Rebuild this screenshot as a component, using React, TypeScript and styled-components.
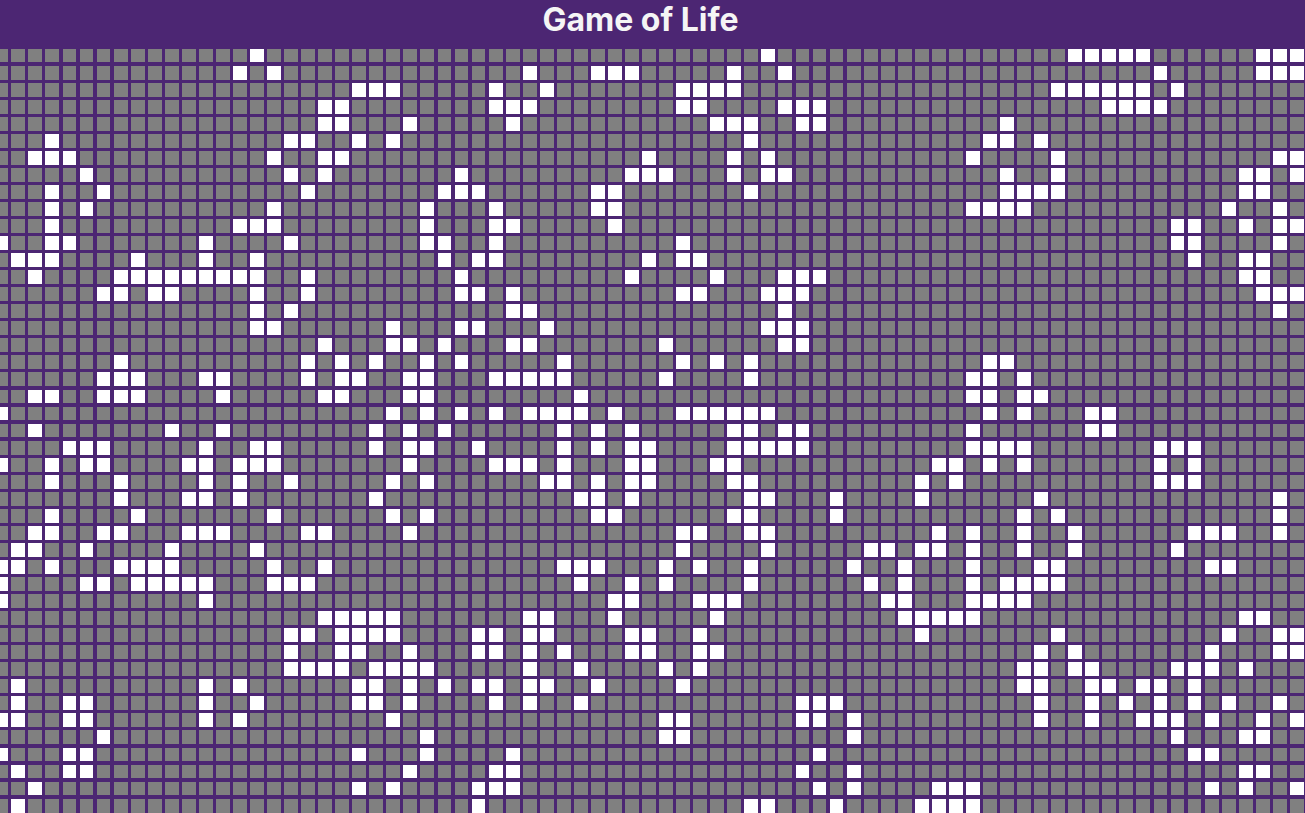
import styled, { createGlobalStyle } from "styled-components";

const COLS = 77;

// alive cells of the current generation, column numbers per row
const BOARD: number[][] = [
    [15, 45, 63, 64, 65, 66, 67, 74, 75, 76],
    [14, 16, 31, 35, 36, 37, 43, 46, 68, 74, 75, 76],
    [21, 22, 23, 29, 32, 40, 41, 42, 43, 62, 63, 64, 65, 66, 67, 69],
    [19, 20, 29, 30, 31, 40, 41, 46, 47, 48, 65, 66, 67, 68],
    [19, 20, 24, 30, 42, 43, 44, 47, 48, 59],
    [3, 17, 18, 21, 23, 44, 58, 59, 61],
    [2, 3, 4, 16, 19, 20, 38, 43, 45, 57, 62, 75, 76],
    [5, 17, 19, 27, 37, 38, 39, 43, 45, 46, 59, 62, 73, 74, 76],
    [3, 6, 18, 26, 27, 28, 35, 36, 44, 59, 60, 61, 62, 73, 74],
    [3, 5, 16, 25, 29, 35, 36, 57, 58, 59, 60, 72, 75],
    [3, 14, 15, 16, 25, 29, 30, 36, 69, 70, 73, 75, 76],
    [0, 3, 4, 12, 17, 25, 26, 29, 40, 69, 70, 75],
    [1, 2, 3, 8, 12, 15, 26, 28, 29, 38, 40, 41, 70, 73, 74],
    [2, 7, 8, 9, 10, 11, 12, 13, 14, 15, 18, 27, 37, 42, 46, 47, 48, 73, 74],
    [6, 7, 9, 10, 15, 18, 27, 28, 30, 40, 41, 45, 46, 47, 74, 75, 76],
    [15, 17, 30, 31, 46, 75],
    [15, 16, 23, 27, 28, 32, 45, 46, 47],
    [19, 23, 24, 26, 30, 31, 39, 46, 47],
    [7, 18, 20, 22, 25, 27, 33, 40, 42, 44, 58, 59],
    [6, 7, 8, 12, 13, 18, 20, 21, 24, 25, 29, 30, 31, 32, 33, 39, 44, 57, 58, 60],
    [2, 3, 6, 7, 8, 13, 19, 20, 24, 25, 34, 57, 58, 60, 61],
    [0, 23, 25, 27, 29, 31, 32, 33, 34, 36, 40, 41, 42, 43, 44, 45, 58, 60, 64, 65],
    [2, 10, 13, 22, 24, 26, 33, 35, 37, 43, 44, 46, 47, 57, 64, 65],
    [4, 5, 6, 12, 15, 16, 22, 24, 25, 28, 33, 35, 37, 38, 43, 44, 45, 46, 47, 57, 58, 59, 60, 68, 69, 70],
    [0, 3, 5, 6, 11, 12, 14, 15, 16, 24, 29, 30, 31, 33, 37, 38, 42, 43, 55, 56, 58, 60, 68, 70],
    [3, 7, 12, 14, 17, 23, 25, 32, 33, 35, 37, 38, 43, 44, 54, 56, 68, 69, 70],
    [7, 11, 12, 14, 22, 34, 35, 37, 44, 45, 49, 54, 61, 75],
    [3, 8, 16, 23, 25, 35, 36, 43, 44, 49, 60, 62, 75],
    [2, 3, 6, 7, 11, 12, 13, 18, 19, 24, 40, 41, 44, 45, 55, 57, 60, 63, 70, 71, 72, 75],
    [1, 2, 5, 10, 15, 40, 45, 51, 52, 54, 55, 57, 60, 63, 69],
    [0, 1, 3, 7, 8, 9, 10, 16, 19, 33, 34, 35, 39, 41, 44, 50, 53, 57, 61, 62, 71, 72],
    [0, 5, 6, 8, 9, 10, 11, 12, 16, 17, 18, 34, 37, 39, 44, 51, 53, 57, 59, 60, 61, 62],
    [0, 12, 36, 37, 41, 42, 43, 52, 53, 57, 58, 59, 60],
    [19, 20, 21, 22, 23, 31, 32, 36, 42, 53, 54, 55, 56, 57, 73, 74],
    [17, 18, 20, 21, 22, 23, 28, 29, 31, 32, 37, 38, 41, 54, 62, 72, 75, 76],
    [17, 20, 21, 24, 28, 29, 31, 33, 37, 38, 41, 42, 61, 63, 71, 75, 76],
    [17, 18, 19, 20, 22, 23, 24, 25, 31, 34, 39, 41, 60, 61, 63, 64, 69, 70, 71, 73],
    [1, 12, 14, 21, 22, 24, 26, 28, 29, 31, 32, 35, 40, 60, 61, 64, 65, 67, 68, 70],
    [1, 4, 5, 12, 15, 21, 22, 24, 29, 31, 34, 47, 48, 49, 61, 64, 66, 68, 70, 72, 75],
    [0, 1, 4, 5, 12, 14, 23, 39, 40, 47, 48, 50, 61, 64, 67, 68, 69, 71, 74, 76],
    [6, 25, 39, 40, 50, 69, 73, 74],
    [0, 4, 5, 21, 25, 30, 48, 70, 71],
    [1, 4, 5, 24, 29, 30, 47, 50, 73, 74],
    [2, 21, 23, 28, 29, 30, 48, 50, 55, 56, 57, 71, 73, 76],
    [1, 28, 44, 45, 49, 54, 55, 56, 57],
];

const GlobalStyle = createGlobalStyle`
    html, body {
        margin: 0;
        height: 100%;
        background-color: #4c2673;
        font-family: Inter, "Liberation Sans", sans-serif;
    }
`;

const Page = styled.div`
    height: 100vh;
    overflow: hidden;
`;

const Header = styled.header`
    display: flex;
    justify-content: center;
    box-sizing: border-box;
    height: 48.59375px;
    padding-right: 24px;
`;

const Title = styled.h1`
    margin: 0;
    color: #f5f5f5;
    font-size: 32px;
    font-weight: 700;
    line-height: 39px;
`;

// the board is wider than the window, the first and last columns get cut off
const Board = styled.div`
    display: grid;
    grid-template-columns: repeat(${COLS}, 13.859375px);
    grid-auto-rows: 13.859375px;
    gap: 3.1875px;
    margin-left: -5.6875px;
`;

const Cell = styled.div<{ $alive: boolean }>`
    background-color: ${(props) => (props.$alive ? "#ffffff" : "#808080")};
`;

function App() {
    return (
        <Page>
            <GlobalStyle />
            <Header>
                <Title>Game of Life</Title>
            </Header>
            <Board>
                {BOARD.map((alive, row) =>
                    Array.from({ length: COLS }, (_, col) => (
                        <Cell key={`${row}-${col}`} $alive={alive.includes(col)} />
                    ))
                )}
            </Board>
        </Page>
    );
}

export default App;
